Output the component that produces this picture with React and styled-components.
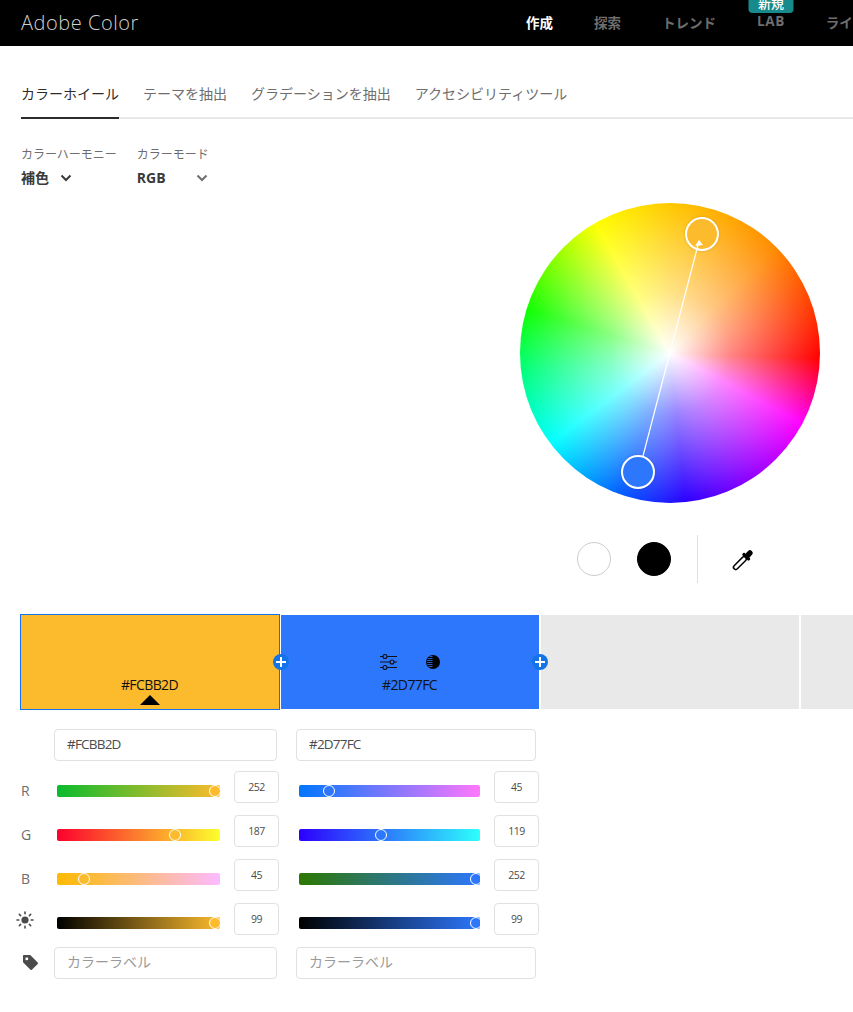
import React from "react";
import styled, { createGlobalStyle } from "styled-components";

const Global = createGlobalStyle`
  html, body { margin: 0; padding: 0; background: #fff; overflow: hidden; }
  body { width: 853px; height: 1012px; font-family: "Open Sans", "Noto Sans CJK JP", sans-serif; color: #4b4b4b; }
  * { box-sizing: border-box; }
`;

const Page = styled.div`width: 853px; height: 1012px; overflow: hidden;`;

const Header = styled.header`
  height: 46px; background: #000; display: flex; align-items: center; padding-left: 21px; white-space: nowrap;
`;
const Brand = styled.div`
  width: 505px; flex: none; font-size: 20px; line-height: 26px; font-weight: 300; color: #d0d0d0; letter-spacing: .55px;
`;
const Nav = styled.nav`display: flex; gap: 41px; flex: none; margin-bottom: 3px;`;
const NavItem = styled.span`
  position: relative; font-size: 13.5px; font-weight: 700; flex: none; color: ${p => (p.$active ? "#fff" : "#6e6e6e")};
`;
const LabText = styled.span`letter-spacing: .6px;`;
const Badge = styled.span`
  position: absolute; left: 50%; top: -18px; transform: translateX(-50%); display: block;
  width: 45px; height: 19px; padding-top: 3px; background: #178a8c; color: #fff; font-size: 13px; font-weight: 500; line-height: 13px; letter-spacing: 0;
  border-radius: 0 0 4px 4px; text-align: center;
`;

const Tabs = styled.div`
  height: 73px; margin-left: 21px; display: flex; gap: 24px; align-items: flex-end; border-bottom: 2px solid #e8e8e8;
`;
const Tab = styled.div`
  height: 46px; font-size: 14px; line-height: 20px; padding-top: 11px; margin-bottom: -2px; white-space: nowrap; flex: none;
  color: ${p => (p.$active ? "#2c2c2c" : "#6e6e6e")};
  border-bottom: 2px solid ${p => (p.$active ? "#2c2c2c" : "transparent")};
`;

const Selects = styled.div`display: flex; gap: 20px; margin: 29px 0 0 21px; height: 55px;`;
const Select = styled.div`display: flex; flex-direction: column; gap: 6px; align-items: flex-start;`;
const SelectLabel = styled.div`font-size: 12px; line-height: 14px; color: #6e6e6e;`;
const SelectValue = styled.div`
  display: flex; align-items: center; justify-content: space-between; width: ${p => p.$w}px;
  font-size: 14px; line-height: 20px; font-weight: 700; color: #3a3a3a;
`;
const Chevron = styled.svg`width: 12px; height: 8px; fill: none; stroke: ${p => p.$c}; stroke-width: 2;`;

const WheelRow = styled.div`padding-left: 520px;`;
const Wheel = styled.div`
  position: relative; width: 300px; height: 300px; border-radius: 50%;
  background:
    radial-gradient(circle closest-side, #fff 0%, rgba(255,255,255,.52) 40%, rgba(255,255,255,0) 100%),
    conic-gradient(#ffc800 0deg, #ff8a00 45deg, #ff0000 92deg, #ff00ff 118deg, #2a00ff 174deg, #0060ff 200deg, #00ffff 233deg, #00ff80 262deg, #10ff00 287deg, #ffff00 330deg, #ffc800 360deg);
`;
const Link = styled.svg`position: absolute; inset: 0; width: 300px; height: 300px; pointer-events: none;`;
const Handle = styled.div`
  position: absolute; width: 34px; height: 34px; border-radius: 50%; border: 2px solid #fff;
  left: ${p => p.$x - 17}px; top: ${p => p.$y - 17}px; background: ${p => p.$c}; box-shadow: 0 0 3px rgba(0,0,0,.15);
`;

const Controls = styled.div`display: flex; align-items: center; margin-top: 32px; height: 48px; padding-left: 577px;`;
const Dot = styled.div`
  width: 34px; height: 34px; border-radius: 50%; margin-right: 26px; flex: none;
  background: ${p => p.$c}; border: 1px solid ${p => (p.$c === "#fff" ? "#ccc" : "#000")};
`;
const Divider = styled.div`width: 1px; height: 48px; background: #e0e0e0; flex: none; margin-right: 30px;`;
const Dropper = styled.svg`width: 30px; height: 30px; flex: none; margin-top: 1px;`;

const Strip = styled.div`display: flex; gap: 2px; margin-top: 32px; height: 94px; padding-left: 20px; width: 1200px;`;
const Swatch = styled.div`
  position: relative; flex: none; width: ${p => p.$w}px; background: ${p => p.$c};
  display: flex; flex-direction: column; align-items: center; justify-content: flex-end; padding-bottom: 15px;
  ${p => p.$selected && "border: 1px solid #1473e6; margin: -1px -1px -1px 0; padding-bottom: 15px;"}
`;
const SwatchTools = styled.div`display: flex; align-items: center; gap: 29px; margin-bottom: 6px;`;
const SlidersIcon = styled.svg`width: 17px; height: 16px; fill: none; stroke: #111; stroke-width: 1.1;`;
const ContrastIcon = styled.svg`width: 14px; height: 14px;`;
const Hex = styled.div`font-size: 14px; line-height: 18px; color: #111; letter-spacing: -.6px; margin-right: 1px;`;
const Plus = styled.div`
  position: absolute; right: ${p => p.$r}px; top: 39px; width: 16px; height: 16px; border-radius: 50%; background: #1473e6; z-index: 2;
  color: #fff; display: flex; align-items: center; justify-content: center;
`;
const Pointer = styled.div`
  position: absolute; left: 119px; bottom: 4px; width: 0; height: 0;
  border-left: 10px solid transparent; border-right: 10px solid transparent; border-bottom: 10px solid #000;
`;

const Panel = styled.div`margin-top: 20px; display: flex; flex-direction: column; gap: 12px;`;
const FieldRow = styled.div`display: flex; height: 32px; gap: 19px; padding-left: 54px; margin-bottom: ${p => p.$mb || 0}px; position: relative;`;
const Field = styled.div`
  width: ${p => p.$w}px; height: 32px; border: 1px solid #e1e1e1; border-radius: 4px; background: #fff; padding-left: 12px;
  font-size: ${p => (p.$placeholder ? 14 : 13.5)}px; line-height: ${p => (p.$placeholder ? 27 : 29)}px; letter-spacing: ${p => (p.$placeholder ? 0 : -0.8)}px;
  color: ${p => (p.$placeholder ? "#9a9a9a" : "#4b4b4b")};
`;
const SliderRow = styled.div`display: flex; height: 32px; align-items: flex-start;`;
const RowLabel = styled.div`
  width: 57px; flex: none; padding: 10px 0 0 21px; font-size: 14px; line-height: 20px; color: #6e6e6e;
`;
const SliderGroup = styled.div`display: flex; gap: 14px; margin-right: 20px; flex: none;`;
const Track = styled.div`
  position: relative; width: ${p => p.$w}px; height: 12px; margin-top: 14px; border-radius: 2px; overflow: hidden; flex: none;
  background: linear-gradient(to right, ${p => p.$from}, ${p => p.$to});
`;
const Thumb = styled.div`
  position: absolute; top: 0; width: 12px; height: 12px; border-radius: 50%; border: 1px solid #fff;
  left: ${p => p.$x}px; background: ${p => p.$c};
`;
const NumBox = styled.div`
  width: 45px; height: 32px; border: 1px solid #e1e1e1; border-radius: 4px; text-align: center; flex: none;
  font-size: 10.5px; line-height: 30px; letter-spacing: -.5px; color: #4b4b4b; background: #fff;
`;
const SunIcon = styled.svg`display: block; width: 18px; height: 18px; margin: -2px 0 0 -5px; fill: #4b4b4b; stroke: #4b4b4b; stroke-width: 1.6; stroke-linecap: round;`;
const TagIcon = styled.svg`position: absolute; left: 22px; top: 7px; width: 17px; height: 17px; fill: #4b4b4b;`;

const chevron = c => (
  <Chevron $c={c} viewBox="0 0 12 8"><path d="M1.5 1.5 6 6l4.500-4.500" /></Chevron>
);

const tabs = ["カラーホイール", "テーマを抽出", "グラデーションを抽出", "アクセシビリティツール"];

const colA = { c: "#FCBB2D", w: 163, rows: [["#0ABB2D", "#FCBB2D", 152, "252"], ["#FC002D", "#FCFF2D", 112, "187"], ["#FCBB00", "#FCBBFF", 21, "45"], ["#000", "#FCBB2D", 152, "99"]] };
const colB = { c: "#2D77FC", w: 181, rows: [["#0077FC", "#FF77FC", 24, "45"], ["#2D00FC", "#2DFFFC", 76, "119"], ["#2D7700", "#2D77FF", 171, "252"], ["#000", "#2D77FC", 171, "99"]] };

const Slider = ({ col, i }) => {
  const [from, to, x, v] = col.rows[i];
  return (
    <SliderGroup>
      <Track $w={col.w} $from={from} $to={to}><Thumb $x={x} $c={col.c} /></Track>
      <NumBox>{v}</NumBox>
    </SliderGroup>
  );
};

const Sun = () => (
  <SunIcon viewBox="0 0 18 18">
    <circle cx="9" cy="9" r="3.6" stroke="none" />
    <path d="M9 1v1.800M9 15.200V17M1 9h1.800M15.200 9H17M3.300 3.300l1.300 1.300M13.400 13.400l1.300 1.300M3.300 14.700l1.300-1.300M13.400 4.600l1.300-1.300" />
  </SunIcon>
);

const PlusMark = () => (
  <svg width="10" height="10" viewBox="0 0 10 10"><path d="M5 0v10M0 5h10" stroke="#fff" strokeWidth="2" /></svg>
);

export default function App() {
  return (
    <Page>
      <Global />
      <Header>
        <Brand>Adobe Color</Brand>
        <Nav>
          <NavItem $active>作成</NavItem>
          <NavItem>探索</NavItem>
          <NavItem>トレンド</NavItem>
          <NavItem><LabText>LAB</LabText><Badge>新規</Badge></NavItem>
          <NavItem>ライブラリ</NavItem>
        </Nav>
      </Header>

      <Tabs>
        {tabs.map((t, i) => <Tab key={t} $active={i === 0}>{t}</Tab>)}
      </Tabs>

      <Selects>
        <Select>
          <SelectLabel>カラーハーモニー</SelectLabel>
          <SelectValue $w={51}>補色{chevron("#3a3a3a")}</SelectValue>
        </Select>
        <Select>
          <SelectLabel>カラーモード</SelectLabel>
          <SelectValue $w={71}>RGB{chevron("#6e6e6e")}</SelectValue>
        </Select>
      </Selects>

      <WheelRow>
        <Wheel>
          <Handle $x={182} $y={31} $c="#FCBB2D" />
          <Handle $x={118} $y={268.5} $c="#2D77FC" />
          <Link viewBox="0 0 300 300">
            <path d="M178 42 123 253" stroke="#fff" strokeWidth="1.200" fill="none" />
            <path d="M179 37l4 5-8 1z" fill="#fff" />
          </Link>
        </Wheel>
      </WheelRow>

      <Controls>
        <Dot $c="#fff" />
        <Dot $c="#000" />
        <Divider />
        <Dropper viewBox="0 0 24 24">
          <g transform="rotate(45 12 12)">
            <rect x="10.200" y="9" width="3.600" height="13" rx="1.800" fill="#fff" stroke="#000" strokeWidth="1.200" />
            <rect x="8.200" y="7" width="7.600" height="2.600" rx="1" fill="#000" />
            <rect x="9.800" y="2" width="4.400" height="6" rx="2" fill="#000" />
          </g>
        </Dropper>
      </Controls>

      <Strip>
        <Swatch $w={260} $c="#FCBB2D" $selected>
          <Hex>#FCBB2D</Hex>
          <Pointer />
          <Plus $r={-10}><PlusMark /></Plus>
        </Swatch>
        <Swatch $w={258} $c="#2D77FC">
          <SwatchTools>
            <SlidersIcon viewBox="0 0 17 16">
              <path d="M0 2.500h3M7 2.500h10M0 8h10M14 8h3M0 13.500h3M7 13.500h10" />
              <circle cx="5" cy="2.500" r="2" />
              <circle cx="12" cy="8" r="2" />
              <circle cx="5" cy="13.500" r="2" />
            </SlidersIcon>
            <ContrastIcon viewBox="0 0 14 14">
              <circle cx="7" cy="7" r="7" fill="#000" />
              <path d="M6.500 1.500H3.500M6.500 3.500H1.700M6.500 5.500H1M6.500 7.500H.9M6.500 9.500H1.300M6.500 11.500H2.500" stroke="#2D77FC" strokeWidth=".8" />
            </ContrastIcon>
          </SwatchTools>
          <Hex>#2D77FC</Hex>
          <Plus $r={-9}><PlusMark /></Plus>
        </Swatch>
        <Swatch $w={258} $c="#e9e9e9" />
        <Swatch $w={258} $c="#e9e9e9" />
      </Strip>

      <Panel>
        <FieldRow $mb={-2}>
          <Field $w={223}>#FCBB2D</Field>
          <Field $w={240}>#2D77FC</Field>
        </FieldRow>
        {["R", "G", "B", "sun"].map((l, i) => (
          <SliderRow key={l}>
            <RowLabel>{l === "sun" ? <Sun /> : l}</RowLabel>
            <Slider col={colA} i={i} />
            <Slider col={colB} i={i} />
          </SliderRow>
        ))}
        <FieldRow>
          <TagIcon viewBox="0 0 17 17">
            <path fillRule="evenodd" d="M1 1.800a.8.8 0 0 1 .8-.8h6.400l7.500 7.500a1 1 0 0 1 0 1.400l-5.800 5.800a1 1 0 0 1-1.400 0L1 8.200zM4.800 3.300a1.500 1.500 0 1 0 0 3 1.500 1.500 0 0 0 0-3z" />
          </TagIcon>
          <Field $w={223} $placeholder>カラーラベル</Field>
          <Field $w={240} $placeholder>カラーラベル</Field>
        </FieldRow>
      </Panel>
    </Page>
  );
}
